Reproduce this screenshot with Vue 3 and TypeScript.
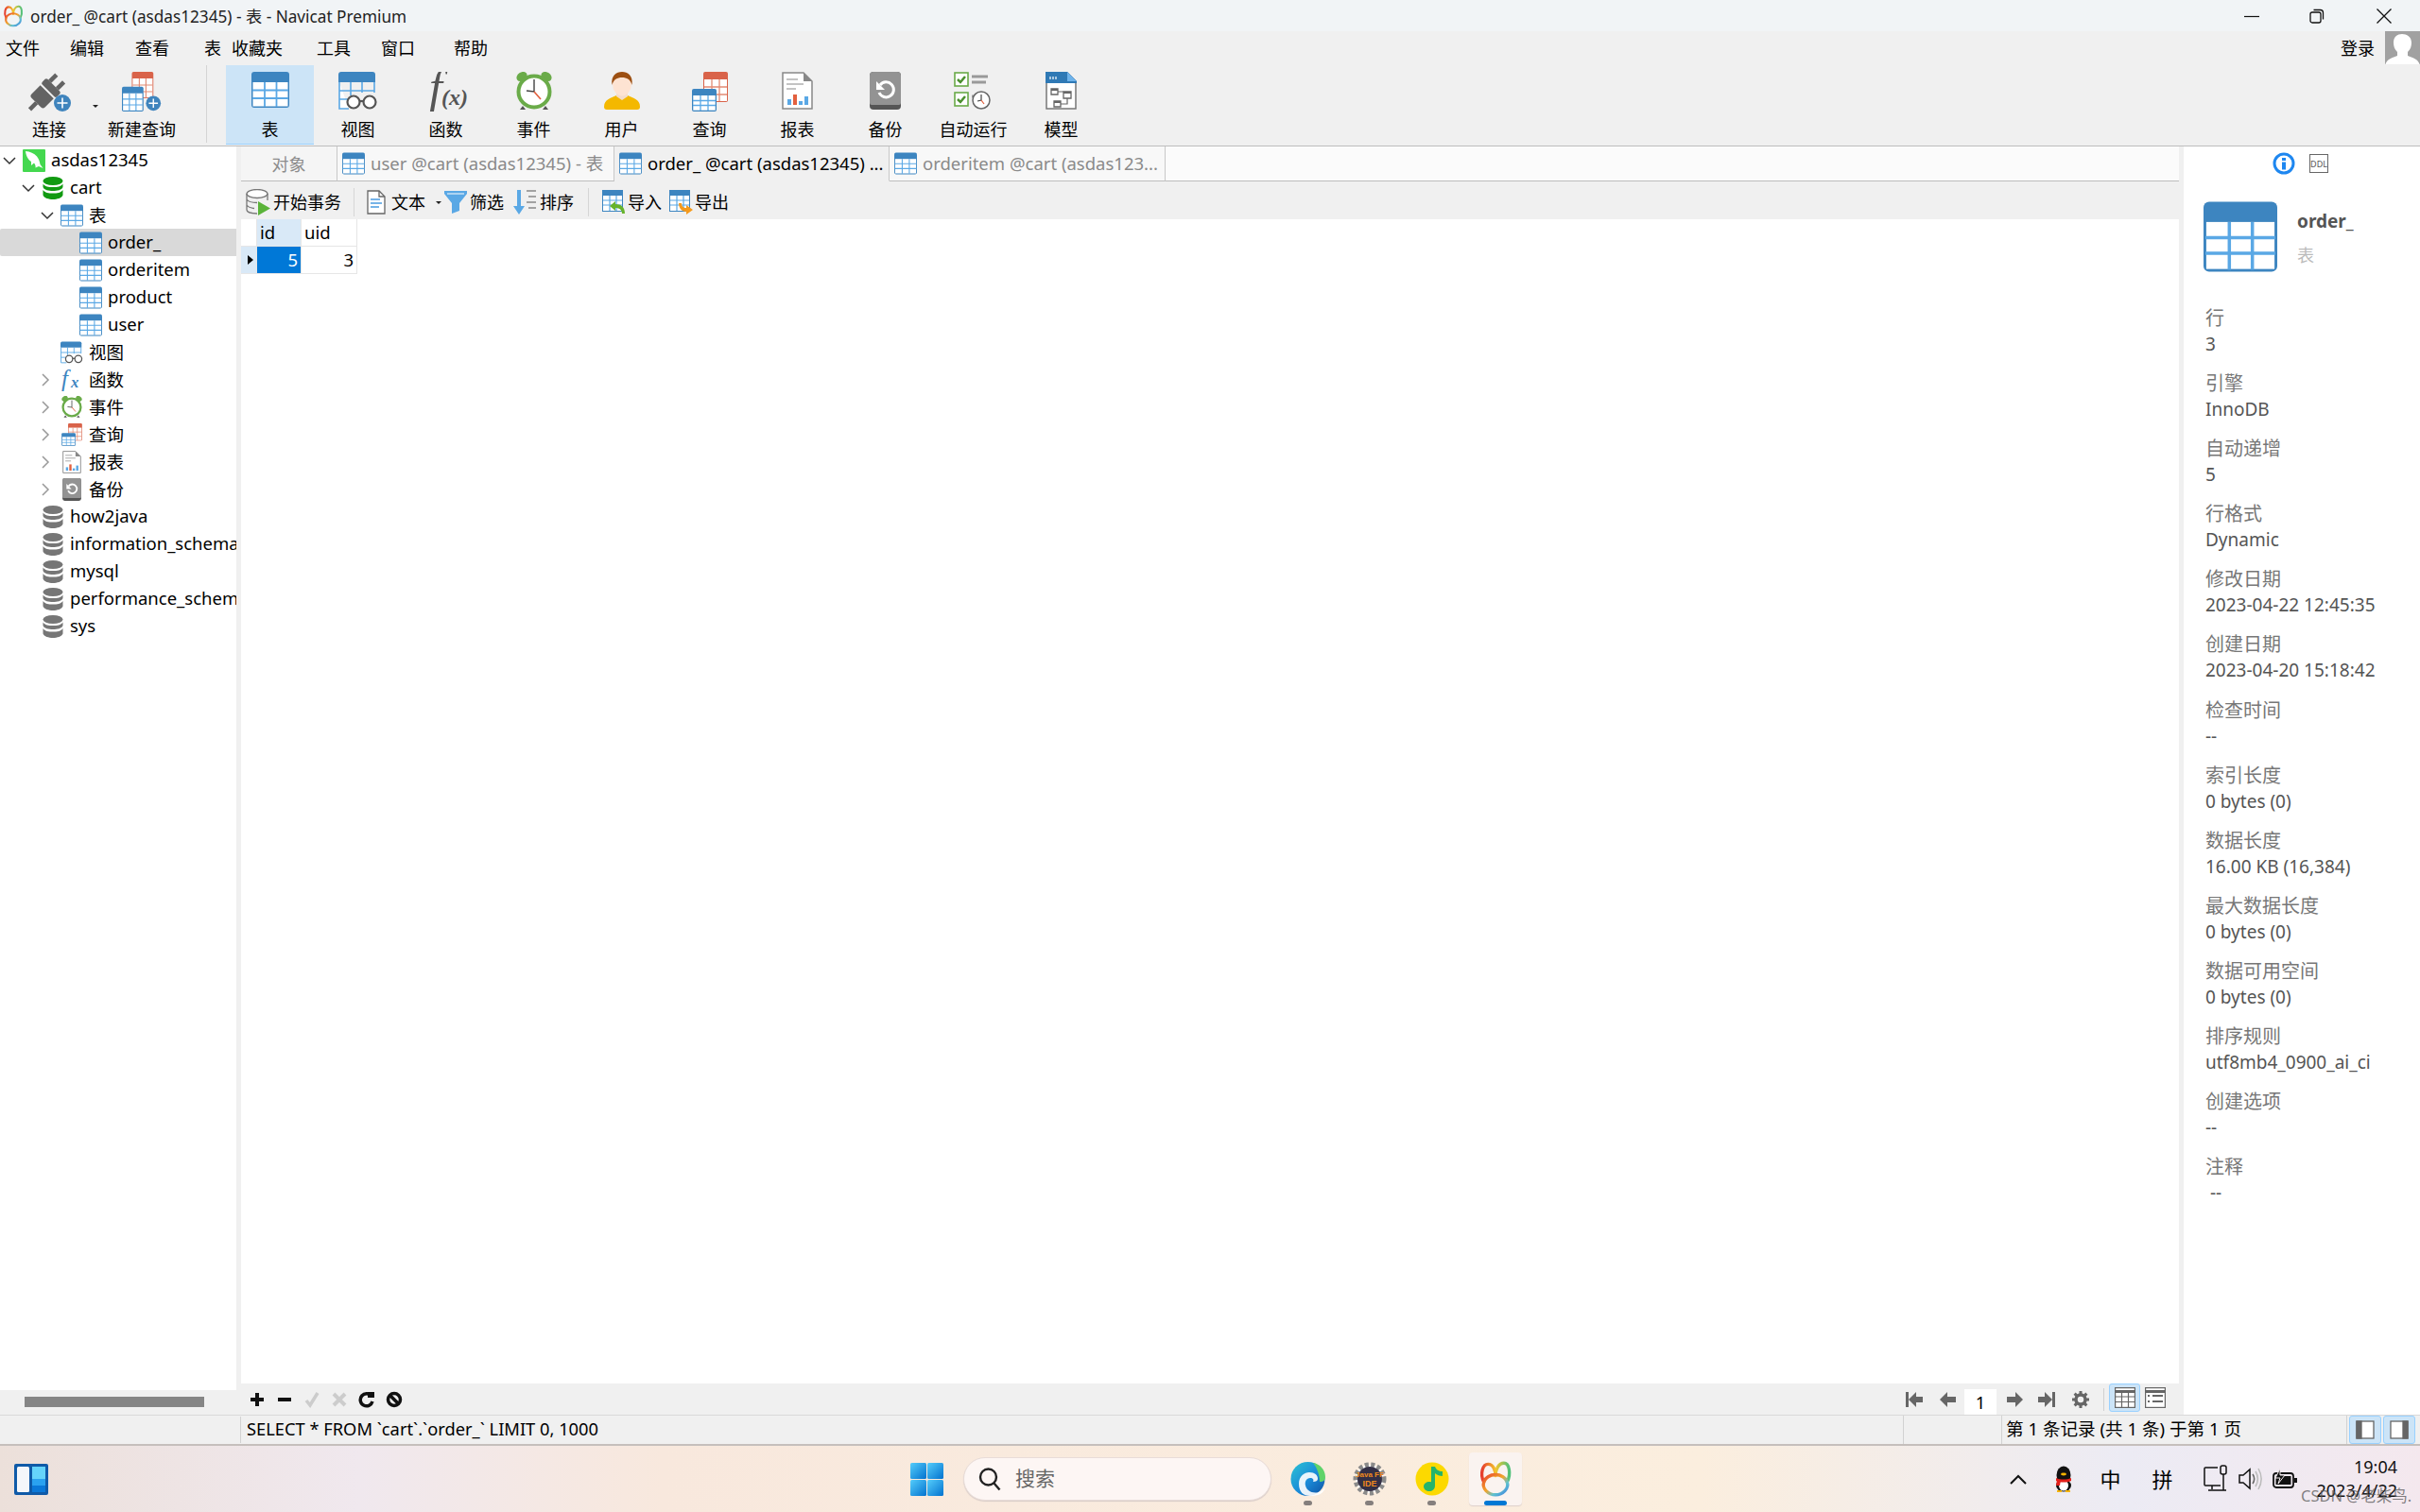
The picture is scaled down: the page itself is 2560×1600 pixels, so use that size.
<script setup lang="ts">
interface ToolItem {
  label: string
  icon: string
  w: number
  h: number
  active?: boolean
}

interface TreeRow {
  label: string
  level: number
  icon: string
  chevron?: 'down' | 'right'
  selected?: boolean
  cls?: string
}

const menus = [
  { label: '文件', w: 68 },
  { label: '编辑', w: 69 },
  { label: '查看', w: 73 },
  { label: '表', w: 29 },
  { label: '收藏夹', w: 90 },
  { label: '工具', w: 68 },
  { label: '窗口', w: 77 },
  { label: '帮助', w: 60 },
]

const tools: ToolItem[] = [
  { label: '表', icon: 'i-table', w: 40, h: 38, active: true },
  { label: '视图', icon: 'i-view', w: 42, h: 40 },
  { label: '函数', icon: 'i-func', w: 44, h: 42 },
  { label: '事件', icon: 'i-clock', w: 40, h: 42 },
  { label: '用户', icon: 'i-user', w: 38, h: 40 },
  { label: '查询', icon: 'i-query', w: 38, h: 42 },
  { label: '报表', icon: 'i-report', w: 33, h: 40 },
  { label: '备份', icon: 'i-backup', w: 33, h: 40 },
  { label: '自动运行', icon: 'i-auto', w: 42, h: 40 },
  { label: '模型', icon: 'i-model', w: 33, h: 40 },
]

const tree: TreeRow[] = [
  { label: 'asdas12345', level: 0, icon: 'i-dolphin', chevron: 'down' },
  { label: 'cart', level: 1, icon: 'i-db', chevron: 'down', cls: 'db-on' },
  { label: '表', level: 2, icon: 'i-table', chevron: 'down' },
  { label: 'order_', level: 3, icon: 'i-table', selected: true },
  { label: 'orderitem', level: 3, icon: 'i-table' },
  { label: 'product', level: 3, icon: 'i-table' },
  { label: 'user', level: 3, icon: 'i-table' },
  { label: '视图', level: 2, icon: 'i-view' },
  { label: '函数', level: 2, icon: 'i-fx', chevron: 'right' },
  { label: '事件', level: 2, icon: 'i-clock', chevron: 'right' },
  { label: '查询', level: 2, icon: 'i-query', chevron: 'right' },
  { label: '报表', level: 2, icon: 'i-report', chevron: 'right' },
  { label: '备份', level: 2, icon: 'i-backup', chevron: 'right' },
  { label: 'how2java', level: 1, icon: 'i-db', cls: 'db-off' },
  { label: 'information_schema', level: 1, icon: 'i-db', cls: 'db-off' },
  { label: 'mysql', level: 1, icon: 'i-db', cls: 'db-off' },
  { label: 'performance_schema', level: 1, icon: 'i-db', cls: 'db-off' },
  { label: 'sys', level: 1, icon: 'i-db', cls: 'db-off' },
]

const tabs = [
  { label: 'user @cart (asdas12345) - 表', w: 293, state: 'idle' },
  { label: 'order_ @cart (asdas12345) ...', w: 291, state: 'active' },
  { label: 'orderitem @cart (asdas123...', w: 292, state: 'idle' },
]

const info = [
  ['行', '3'],
  ['引擎', 'InnoDB'],
  ['自动递增', '5'],
  ['行格式', 'Dynamic'],
  ['修改日期', '2023-04-22 12:45:35'],
  ['创建日期', '2023-04-20 15:18:42'],
  ['检查时间', '--'],
  ['索引长度', '0 bytes (0)'],
  ['数据长度', '16.00 KB (16,384)'],
  ['最大数据长度', '0 bytes (0)'],
  ['数据可用空间', '0 bytes (0)'],
  ['排序规则', 'utf8mb4_0900_ai_ci'],
  ['创建选项', '--'],
  ['注释', ' --'],
]
</script>

<template>
  <div class="app">
    <svg class="defs" aria-hidden="true">
      <defs>
        <linearGradient id="g-ring" x1="0" y1="0" x2="1" y2="1">
          <stop offset="0" stop-color="#e8442e" />
          <stop offset="0.45" stop-color="#f2a52a" />
          <stop offset="0.7" stop-color="#5fc3d0" />
          <stop offset="1" stop-color="#3f7fe0" />
        </linearGradient>
        <linearGradient id="g-arch" x1="0" y1="0" x2="1" y2="0">
          <stop offset="0" stop-color="#e63c2e" />
          <stop offset="0.5" stop-color="#f5c62c" />
          <stop offset="1" stop-color="#4fc07a" />
        </linearGradient>
        <linearGradient id="g-edge" x1="0" y1="0" x2="1" y2="1">
          <stop offset="0" stop-color="#2cc4d4" />
          <stop offset="0.55" stop-color="#1a8ad8" />
          <stop offset="1" stop-color="#0f4fa0" />
        </linearGradient>
        <linearGradient id="g-win" x1="0" y1="0" x2="1" y2="1">
          <stop offset="0" stop-color="#55cdfb" />
          <stop offset="1" stop-color="#0272cf" />
        </linearGradient>

        <symbol id="i-table" viewBox="0 0 40 38">
          <rect width="40" height="38" rx="3" fill="#3d85c0" />
          <rect x="1.5" y="11" width="37" height="25.5" fill="#fff" />
          <path d="M14 11v26M26.500 11v26M1 19.500h38M1 28h38" stroke="#5aa8e5" stroke-width="1.800" fill="none" />
        </symbol>
        <symbol id="i-view" viewBox="0 0 42 40">
          <path d="M3 0h33a3 3 0 0 1 3 3v8H0V3a3 3 0 0 1 3-3z" fill="#3d85c0" />
          <path d="M1 11v28h10M38 11v11M1 20h37M1 29h9M13 11v14M25 11v11" stroke="#5aa8e5" stroke-width="1.600" fill="#fff" />
          <circle cx="16" cy="32" r="6.500" fill="#fff" stroke="#555" stroke-width="2.200" />
          <circle cx="33" cy="32" r="6.500" fill="#fff" stroke="#555" stroke-width="2.200" />
          <path d="M22.500 31h4" stroke="#555" stroke-width="2.200" />
        </symbol>
        <symbol id="i-func" viewBox="0 0 44 42">
          <text x="4" y="33" font-family="Liberation Serif" font-style="italic" font-size="50" fill="#555">f</text>
          <text x="17" y="35" font-family="Liberation Serif" font-style="italic" font-weight="700" font-size="24" fill="#555">(x)</text>
        </symbol>
        <symbol id="i-fx" viewBox="0 0 26 26">
          <text x="1" y="21" font-family="Liberation Serif" font-style="italic" font-size="27" fill="#3d85c0">f</text>
          <text x="12" y="22" font-family="Liberation Serif" font-style="italic" font-weight="700" font-size="18" fill="#3d85c0">x</text>
        </symbol>
        <symbol id="i-clock" viewBox="0 0 40 42">
          <ellipse cx="7" cy="5" rx="6" ry="4.500" fill="#6aab49" transform="rotate(-35 7 5)" />
          <ellipse cx="33" cy="5" rx="6" ry="4.500" fill="#6aab49" transform="rotate(35 33 5)" />
          <path d="M8 36l-3 4h6zM32 36l3 4h-6z" fill="#555" />
          <circle cx="20" cy="21" r="16.500" fill="#fff" stroke="#6aab49" stroke-width="4" />
          <path d="M20 8v13l-8-1" stroke="#444" stroke-width="1.400" fill="none" />
          <path d="M20 21l7 8" stroke="#e2603f" stroke-width="1.600" />
        </symbol>
        <symbol id="i-user" viewBox="0 0 38 40">
          <path d="M0 37c0-8 7-9 13-12h12c6 3 13 4 13 12a3 3 0 0 1-3 3H3a3 3 0 0 1-3-3z" fill="#f4b800" />
          <path d="M13 20h12v6l-6 4-6-4z" fill="#f3dccb" />
          <ellipse cx="19" cy="13" rx="10" ry="12.500" fill="#fde3d2" />
          <path d="M8.500 14C7 4 13 0 19 0s12 4 10.500 14C28 8 24 6 19 6s-9 2-10.500 8z" fill="#9c4f12" />
        </symbol>
        <symbol id="i-query" viewBox="0 0 38 42">
          <rect x="12" y="0" width="26" height="32" rx="2" fill="#d9634a" />
          <rect x="13" y="8" width="24" height="23" fill="#fff" />
          <path d="M21 8v23M29 8v23M13 16h24M13 24h24" stroke="#e28b74" stroke-width="1.300" fill="none" />
          <rect x="0" y="18" width="26" height="24" rx="2" fill="#3d85c0" />
          <rect x="1.300" y="25" width="23.400" height="15.700" fill="#fff" />
          <path d="M9 25v16M17 25v16M1 30.500h24M1 35.500h24" stroke="#5aa8e5" stroke-width="1.300" fill="none" />
        </symbol>
        <symbol id="i-report" viewBox="0 0 33 40">
          <path d="M1 1h22l9 9v29H1z" fill="#fff" stroke="#888" stroke-width="1.500" />
          <path d="M23 1l9 9h-9z" fill="#888" />
          <path d="M5 8h12M5 13h18M5 18h10" stroke="#888" stroke-width="1.200" />
          <path d="M6 29h4v6H6z" fill="#5aa8e5" />
          <path d="M12 24h4v11h-4z" fill="#e2603f" />
          <path d="M18 31h4v4h-4z" fill="#5aa8e5" />
          <path d="M24 26h4v9h-4z" fill="#5aa8e5" />
        </symbol>
        <symbol id="i-backup" viewBox="0 0 33 40">
          <rect width="33" height="40" rx="4" fill="#555" />
          <path d="M0 4a4 4 0 0 1 4-4h25a4 4 0 0 1 4 4v29a2 2 0 0 1-2 2H2a2 2 0 0 1-2-2z" fill="#939393" />
          <path d="M11 14a8 8 0 1 1-1 8" stroke="#fff" stroke-width="3" fill="none" />
          <path d="M7 10v9h9z" fill="#fff" />
        </symbol>
        <symbol id="i-auto" viewBox="0 0 42 40">
          <rect x="1" y="1" width="14" height="14" fill="#fff" stroke="#6aab49" stroke-width="1.600" />
          <path d="M4 8l3 3 5-6" stroke="#4b8f2f" stroke-width="2.500" fill="none" />
          <rect x="1" y="22" width="14" height="14" fill="#fff" stroke="#6aab49" stroke-width="1.600" />
          <path d="M4 29l3 3 5-6" stroke="#4b8f2f" stroke-width="2.500" fill="none" />
          <path d="M19 5h17M19 11h15" stroke="#999" stroke-width="3" />
          <path d="M19 26h4" stroke="#999" stroke-width="3" />
          <circle cx="29" cy="30" r="9" fill="#fff" stroke="#666" stroke-width="1.500" />
          <path d="M29 24v6l-4 1" stroke="#444" stroke-width="1.200" fill="none" />
          <path d="M29 30l3 4" stroke="#e2603f" stroke-width="1.200" />
        </symbol>
        <symbol id="i-model" viewBox="0 0 33 40">
          <path d="M1 1h22l9 9v29H1z" fill="#fff" stroke="#777" stroke-width="1.500" />
          <path d="M0 0h23l10 10v2H0z" fill="#2f79b5" />
          <path d="M23 0l10 10H23z" fill="#6db2ea" />
          <path d="M5 5v3M8 5v3M11 5v3" stroke="#fff" stroke-width="1.200" />
          <g fill="#fff" stroke="#666" stroke-width="1.300">
            <path d="M6 18h7v6H6zM19 21h8v7h-8zM9 31h7v6H9z" />
          </g>
          <path d="M6 18h7v2H6zM19 21h8v2h-8zM9 31h7v2H9z" fill="#666" />
          <path d="M13 21h6M23 28v6h-7" stroke="#666" stroke-width="1.200" fill="none" />
        </symbol>
        <symbol id="i-plug" viewBox="0 0 47 44">
          <g transform="rotate(-45 20 22)" fill="#636363">
            <rect x="-5" y="20" width="10" height="4.500" />
            <path d="M5 15a3 3 0 0 1 3-3h13v20H8a3 3 0 0 1-3-3z" />
          </g>
          <g transform="rotate(-45 20 22)" fill="#636363">
            <rect x="23" y="11" width="8" height="22" rx="2" />
            <rect x="31" y="14" width="10" height="4.500" />
            <rect x="31" y="25" width="10" height="4.500" />
          </g>
          <circle cx="37" cy="33" r="9" fill="#3f84bd" />
          <path d="M37 27.500v11M31.500 33h11" stroke="#fff" stroke-width="1.600" />
        </symbol>
        <symbol id="i-newq" viewBox="0 0 48 48">
          <rect x="12" y="0" width="26" height="32" rx="2" fill="#d9634a" />
          <rect x="13" y="8" width="24" height="23" fill="#fff" />
          <path d="M21 8v23M29 8v23M13 16h24M13 24h24" stroke="#e28b74" stroke-width="1.300" fill="none" />
          <rect x="0" y="18" width="26" height="30" rx="2" fill="#3d85c0" />
          <rect x="1.300" y="26" width="23.400" height="20.700" fill="#fff" />
          <path d="M9 26v21M17 26v21M1 33h24M1 40h24" stroke="#5aa8e5" stroke-width="1.300" fill="none" />
          <circle cx="38" cy="38" r="9" fill="#3f84bd" />
          <path d="M38 32.500v11M32.500 38h11" stroke="#fff" stroke-width="1.600" />
        </symbol>
        <symbol id="i-db" viewBox="0 0 22 24">
          <ellipse cx="11" cy="4.500" rx="10.500" ry="4.500" fill="currentColor" />
          <path d="M.5 7.500c2 3 6 3.500 10.500 3.500s8.500-.5 10.500-3.500v3.500c-1 3-6 4-10.500 4S1.500 14 .5 11z" fill="currentColor" />
          <path d="M.5 14c2 3 6 3.500 10.500 3.500S19.500 17 21.500 14v5.500c-1 3-6 4.500-10.500 4.500S1.500 22.500.5 19.500z" fill="currentColor" />
        </symbol>
        <symbol id="i-dolphin" viewBox="0 0 24 24">
          <rect width="24" height="24" rx="1" fill="#44d84f" />
          <path d="M3 2c5 .5 9 2 12 5.500 2 2.500 3 5.500 3.500 8.500l3 4-4.500-2-3.500 1.500c.5-2-.5-4-1.500-5l-3 2.500 0-4C6 11 3.500 7 3 2z" fill="#fff" />
        </symbol>
        <symbol id="i-start" viewBox="0 0 26 28">
          <ellipse cx="12" cy="5" rx="11" ry="4.500" fill="#fff" stroke="#777" stroke-width="1.300" />
          <path d="M1 5v17c0 2.500 5 4 11 4M23 5v7M1 11c2 3 7 3.500 11 3.500M1 17c2 3 5 3 8 3.500" fill="none" stroke="#777" stroke-width="1.300" />
          <path d="M13 13l13 7.500L13 28z" fill="#5ab339" />
        </symbol>
        <symbol id="i-text" viewBox="0 0 20 26">
          <path d="M1 1h12l6 6v18H1z" fill="#fff" stroke="#666" stroke-width="1.300" />
          <path d="M13 1v6h6" fill="none" stroke="#666" stroke-width="1.300" />
          <path d="M4 10h10M4 14h12M4 18h9" stroke="#4a9ae0" stroke-width="1.500" />
        </symbol>
        <symbol id="i-filter" viewBox="0 0 24 24">
          <path d="M0 0h24v3l-8 10v8l-8 3V13L0 3z" fill="#5aa8e5" />
          <path d="M3 3h18" stroke="#fff" stroke-width="1" />
        </symbol>
        <symbol id="i-sort" viewBox="0 0 24 26">
          <path d="M4 0h4v17h4l-6 9-6-9h4z" fill="#5aa8e5" />
          <path d="M14 1h10M16 7h8M14 13h10M16 19h8" stroke="#888" stroke-width="1.400" />
        </symbol>
        <symbol id="i-import" viewBox="0 0 26 26">
          <rect width="22" height="23" fill="#3d85c0" />
          <rect x="1" y="6" width="20" height="16" fill="#fff" />
          <path d="M8 6v16M15 6v16M1 11h20M1 16h20" stroke="#5aa8e5" stroke-width="1.200" />
          <path d="M8 17l6-5v3c6 0 10 3 10 10h-3c0-4-3-6-7-6v3z" fill="#67b32c" />
        </symbol>
        <symbol id="i-export" viewBox="0 0 26 26">
          <rect width="22" height="23" fill="#3d85c0" />
          <rect x="1" y="6" width="20" height="16" fill="#fff" />
          <path d="M8 6v16M15 6v16M1 11h20M1 16h20" stroke="#5aa8e5" stroke-width="1.200" />
          <path d="M10 14h3c0 3 2 5 5 5v-3l7 5-7 5v-3c-5 0-8-4-8-9z" fill="#f59a1c" />
        </symbol>
        <symbol id="i-logo" viewBox="0 0 32 34">
          <path d="M5 20C1 12 4 3 9 3s7 6 7 11M16 14c0-6 3-12 8-12s7 10 3 18" fill="none" stroke="url(#g-arch)" stroke-width="3" stroke-linecap="round" />
          <path d="M5 20c-2 6 4 12 11 12s13-6 11-12c-1-4-6-7-11-7s-10 3-11 7z" fill="none" stroke="url(#g-ring)" stroke-width="3" />
        </symbol>
      </defs>
    </svg>

    <header class="titlebar">
      <svg class="title-logo" width="22" height="24"><use href="#i-logo" /></svg>
      <span class="title-text">order_ @cart (asdas12345) - 表 - Navicat Premium</span>
      <div class="win-btns">
        <button class="win-btn"><svg width="16" height="16"><path d="M0 8.500h16" stroke="#111" stroke-width="1.200" /></svg></button>
        <button class="win-btn">
          <svg width="16" height="16" fill="none" stroke="#111" stroke-width="1.300"><rect x="1" y="4" width="11" height="11" rx="2" /><path d="M4.500 1.500h7a3 3 0 0 1 3 3v7" /></svg>
        </button>
        <button class="win-btn"><svg width="16" height="16"><path d="M.5.500l15 15M15.500.500l-15 15" stroke="#111" stroke-width="1.300" /></svg></button>
      </div>
    </header>

    <nav class="menubar">
      <span v-for="m in menus" :key="m.label" class="menu-item" :style="{ width: m.w + 'px' }">{{ m.label }}</span>
      <span class="login">登录</span>
      <div class="avatar">
        <svg width="37" height="36" viewBox="0 0 37 36"><path d="M0 36c2-7 8-8 13-10v-4c-3-3-4-6-4-10 0-6 4-9 9-9s10 3 10 9c0 4-1 7-4 10v4c5 2 11 3 13 10z" fill="#fff" /></svg>
      </div>
    </nav>

    <section class="toolbar">
      <button class="tool tool-conn">
        <span class="tool-icon"><svg width="47" height="44"><use href="#i-plug" /></svg></span>
        <span class="tool-label">连接</span>
      </button>
      <span class="caret conn-caret"></span>
      <button class="tool tool-newq">
        <span class="tool-icon"><svg width="48" height="42"><use href="#i-newq" /></svg></span>
        <span class="tool-label">新建查询</span>
      </button>
      <span class="tool-sep"></span>
      <button v-for="t in tools" :key="t.label" class="tool" :class="{ 'tool-on': t.active }">
        <span class="tool-icon"><svg :width="t.w" :height="t.h"><use :href="'#' + t.icon" /></svg></span>
        <span class="tool-label">{{ t.label }}</span>
      </button>
    </section>

    <div class="workspace">
      <aside class="side">
        <div class="tree">
          <div
            v-for="row in tree"
            :key="row.label + row.level"
            class="tree-row"
            :class="{ selected: row.selected }"
            :style="{ paddingLeft: 3 + row.level * 20 + 'px' }"
          >
            <span class="chev">
              <svg v-if="row.chevron === 'down'" width="14" height="10"><path d="M1 2l6 6 6-6" fill="none" stroke="#333" stroke-width="1.500" /></svg>
              <svg v-else-if="row.chevron === 'right'" width="10" height="14"><path d="M2 1l6 6-6 6" fill="none" stroke="#999" stroke-width="1.500" /></svg>
            </span>
            <span class="tree-icon" :class="row.cls">
              <svg width="24" height="24"><use :href="'#' + row.icon" /></svg>
            </span>
            <span class="tree-label">{{ row.label }}</span>
          </div>
        </div>
        <div class="side-scroll"><span class="side-thumb"></span></div>
      </aside>

      <main class="main">
        <div class="tabs">
          <span class="tab tab-obj">对象</span>
          <span
            v-for="t in tabs"
            :key="t.label"
            class="tab"
            :class="t.state === 'active' ? 'tab-active' : 'tab-idle'"
            :style="{ width: t.w + 'px' }"
          >
            <svg width="24" height="24"><use href="#i-table" /></svg>
            <span class="tab-text">{{ t.label }}</span>
          </span>
          <span class="tab-rest"></span>
        </div>

        <div class="subbar">
          <span class="sub-item si-start"><svg width="26" height="28"><use href="#i-start" /></svg>开始事务</span>
          <span class="sub-sep sep-a"></span>
          <span class="sub-item si-text"><svg width="20" height="26"><use href="#i-text" /></svg>文本<span class="caret"></span></span>
          <span class="sub-item si-filter"><svg width="24" height="24"><use href="#i-filter" /></svg>筛选</span>
          <span class="sub-item si-sort"><svg width="24" height="26"><use href="#i-sort" /></svg>排序</span>
          <span class="sub-sep sep-b"></span>
          <span class="sub-item si-imp"><svg width="26" height="26"><use href="#i-import" /></svg>导入</span>
          <span class="sub-item si-exp"><svg width="26" height="26"><use href="#i-export" /></svg>导出</span>
        </div>

        <div class="grid-wrap">
          <div class="grid">
            <div class="gc g-corner"></div>
            <div class="gc g-head g-head-on">id</div>
            <div class="gc g-head">uid</div>
            <div class="gc g-rowhead"><span class="row-mark"></span></div>
            <div class="gc g-num g-sel">5</div>
            <div class="gc g-num">3</div>
          </div>
        </div>

        <div class="pager">
          <span class="pg-cell">
            <svg width="18" height="18"><path d="M2 9h14M9 2v14" stroke="#111" stroke-width="4" /></svg>
          </span>
          <span class="pg-cell">
            <svg width="18" height="18"><path d="M2 9h14" stroke="#111" stroke-width="4" /></svg>
          </span>
          <span class="pg-cell">
            <svg width="18" height="18"><path d="M3 10l4 5 8-13" fill="none" stroke="#ccc" stroke-width="3.500" /></svg>
          </span>
          <span class="pg-cell">
            <svg width="18" height="18"><path d="M3 3l12 12M15 3L3 15" stroke="#ccc" stroke-width="4" /></svg>
          </span>
          <span class="pg-cell">
            <svg width="18" height="18" fill="none" stroke="#111" stroke-width="3.500"><path d="M14 5.500A6.500 6.500 0 1 0 15 11" /><path d="M10 1h7v6h-7z" fill="#111" stroke="none" /></svg>
          </span>
          <span class="pg-cell">
            <svg width="18" height="18" fill="none" stroke="#111" stroke-width="3.500"><circle cx="9" cy="9" r="6.500" /><path d="M4.500 4.500l9 9" /></svg>
          </span>

          <div class="pg-right">
            <span class="pg-nav pn-first"><svg width="18" height="16"><path d="M0 0h3v16H0zM3 8l8-8v5h7v6h-7v5z" fill="#666" /></svg></span>
            <span class="pg-nav pn-prev"><svg width="18" height="16"><path d="M0 8l8-8v5h9v6H8v5z" fill="#666" /></svg></span>
            <span class="pg-box">1</span>
            <span class="pg-nav pn-next"><svg width="18" height="16"><path d="M18 8l-8-8v5H1v6h9v5z" fill="#666" /></svg></span>
            <span class="pg-nav pn-last"><svg width="18" height="16"><path d="M18 0h-3v16h3zM15 8L7 0v5H0v6h7v5z" fill="#666" /></svg></span>
            <span class="pg-nav pn-gear">
              <svg width="18" height="18" viewBox="0 0 18 18"><circle cx="9" cy="9" r="5" fill="none" stroke="#666" stroke-width="3.500" /><path d="M9 0v4M9 14v4M0 9h4M14 9h4M2.600 2.600l3 3M12.400 12.400l3 3M15.400 2.600l-3 3M5.600 12.400l-3 3" stroke="#666" stroke-width="3" /></svg>
            </span>
            <span class="pg-sep"></span>
            <span class="pg-view pg-view-on">
              <svg width="22" height="22" fill="#fff" stroke="#666" stroke-width="1.200"><rect x=".6" y=".6" width="20.800" height="20.800" /><path d="M.6 4.500h20.800" stroke-width="3" /><path d="M7.500 4v17M14.500 4v17M1 10h20M1 15.500h20" /></svg>
            </span>
            <span class="pg-view">
              <svg width="22" height="22" fill="#fff" stroke="#666" stroke-width="1.200"><rect x=".6" y=".6" width="20.800" height="20.800" /><path d="M.6 4.500h20.800" stroke-width="3" /><path d="M3 9h2M8 9h11M3 15h2M8 15h11" stroke-width="2" /></svg>
            </span>
          </div>
        </div>
      </main>

      <aside class="panel">
        <div class="panel-tabs">
          <svg width="24" height="24" viewBox="0 0 24 24"><circle cx="12" cy="12" r="10" fill="#fff" stroke="#1e87f0" stroke-width="3" /><path d="M10 6h4v3h-4zM10 10.500h4v8h-4z" fill="#1e87f0" /></svg>
          <span class="ddl">DDL</span>
        </div>
        <div class="panel-head">
          <svg width="78" height="75"><use href="#i-table" /></svg>
          <div class="panel-name">
            <span class="obj-name">order_</span>
            <span class="obj-type">表</span>
          </div>
        </div>
        <dl class="props">
          <div v-for="p in info" :key="p[0]" class="prop">
            <dt>{{ p[0] }}</dt>
            <dd>{{ p[1] }}</dd>
          </div>
        </dl>
      </aside>
    </div>

    <footer class="statusbar">
      <span class="st-left"></span>
      <span class="st-sql">SELECT * FROM `cart`.`order_` LIMIT 0, 1000</span>
      <span class="st-gap"></span>
      <span class="st-rec">第 1 条记录 (共 1 条) 于第 1 页</span>
      <span class="st-toggle">
        <svg width="20" height="20" fill="#fff" stroke="#666" stroke-width="1.300"><rect x="1" y="1" width="18" height="18" /><rect x="1" y="1" width="5" height="18" fill="#666" /></svg>
      </span>
      <span class="st-toggle">
        <svg width="20" height="20" fill="#fff" stroke="#666" stroke-width="1.300"><rect x="1" y="1" width="18" height="18" /><rect x="14" y="1" width="5" height="18" fill="#666" /></svg>
      </span>
    </footer>

    <div class="taskbar">
      <div class="tb-left">
        <svg width="36" height="33" viewBox="0 0 36 33">
          <rect width="36" height="33" rx="2" fill="#0f5aa8" />
          <rect x="3" y="3" width="13" height="27" rx="1.500" fill="#f5f7fa" />
          <rect x="19" y="3" width="14" height="13" fill="#65d4fb" />
          <rect x="19" y="16" width="14" height="7" fill="#2aa2f0" />
          <rect x="19" y="23" width="14" height="7" fill="#0a78d8" />
        </svg>
      </div>

      <div class="tb-center">
        <svg class="tb-win" width="35" height="35" viewBox="0 0 35 35">
          <rect width="17" height="17" rx="1.500" fill="url(#g-win)" />
          <rect x="18" width="17" height="17" rx="1.500" fill="url(#g-win)" />
          <rect y="18" width="17" height="17" rx="1.500" fill="url(#g-win)" />
          <rect x="18" y="18" width="17" height="17" rx="1.500" fill="url(#g-win)" />
        </svg>
        <div class="tb-search">
          <svg width="24" height="26" fill="none" stroke="#222" stroke-width="2.400"><circle cx="10.500" cy="11" r="8.500" /><path d="M16.500 17.500l6 7" /></svg>
          <span class="tb-search-text">搜索</span>
        </div>
        <span class="tb-app app-edge">
          <svg width="37" height="36" viewBox="0 0 37 36">
            <circle cx="18.500" cy="18" r="18" fill="url(#g-edge)" />
            <path d="M9 23c0-8 6-12 11-12 6 0 9 3 9 7 0 2-2 3-5 3 1-2 0-4-3-4-4 0-6 4-5 8 1 5 7 9 14 7 3-1 5-3 7-5-2 7-8 9-16 9-7 0-12-4-12-13z" fill="#fff" opacity=".9" />
            <path d="M24 1c7 1 13 7 13 15 0 3-2 5-6 5 0-8-3-15-7-20z" fill="#5fd36a" />
          </svg>
          <i class="dot"></i>
        </span>
        <span class="tb-app app-java">
          <svg width="36" height="36" viewBox="0 0 36 36">
            <circle cx="18" cy="18" r="15" fill="#fff" stroke="#8a8a8a" stroke-width="5" stroke-dasharray="4 2.500" />
            <circle cx="18" cy="18" r="13" fill="#332f45" />
            <text x="18" y="16" text-anchor="middle" font-family="Liberation Sans" font-weight="700" font-size="8" fill="#f08a1d">Java FF</text>
            <text x="18" y="26" text-anchor="middle" font-family="Liberation Sans" font-weight="700" font-size="9" fill="#f08a1d">IDE</text>
          </svg>
          <i class="dot"></i>
        </span>
        <span class="tb-app app-music">
          <svg width="36" height="36" viewBox="0 0 36 36">
            <circle cx="18" cy="18" r="17.500" fill="#fcd900" />
            <path d="M17 5h4c1 3 4 5 8 5v5c-3 0-6-1-8-3v13c0 4-3 6-6 6s-6-2-6-5 3-5 6-5c1 0 2 0 2 .5z" fill="#25b46b" />
          </svg>
          <i class="dot"></i>
        </span>
        <span class="tb-app app-navi">
          <svg width="36" height="38"><use href="#i-logo" /></svg>
          <i class="bar"></i>
        </span>
      </div>

      <div class="tray">
        <span class="tr c-chev"><svg width="18" height="11"><path d="M1 10l8-8 8 8" fill="none" stroke="#111" stroke-width="2" /></svg></span>
        <span class="tr c-qq">
          <svg width="20" height="28" viewBox="0 0 20 28">
            <ellipse cx="10" cy="10" rx="7.500" ry="9.500" fill="#111" />
            <ellipse cx="10" cy="21" rx="8" ry="6.500" fill="#111" />
            <ellipse cx="10" cy="21" rx="5" ry="5.500" fill="#fff" />
            <ellipse cx="10" cy="9" rx="3" ry="1.400" fill="#f5b301" />
            <path d="M2 13c5 2 11 2 16 0v3c-5 2-11 2-16 0z" fill="#e3201b" />
            <path d="M3 15h4l-1 6H2z" fill="#e3201b" />
            <path d="M3 26h5v2H3zM12 26h5v2h-5z" fill="#f5b301" />
          </svg>
        </span>
        <span class="tr c-zh">中</span>
        <span class="tr c-py">拼</span>
        <span class="tr c-mon">
          <svg width="26" height="30" viewBox="0 0 26 30" fill="none" stroke="#111" stroke-width="1.500">
            <path d="M15 3H2a1 1 0 0 0-1 1v17a1 1 0 0 0 1 1h16" />
            <path d="M9 22v4M5 27h19" />
            <rect x="18" y="1" width="6" height="9" rx="2" />
            <path d="M21 10v17" />
          </svg>
        </span>
        <span class="tr c-spk">
          <svg width="25" height="26" viewBox="0 0 25 26" fill="none" stroke-width="1.500">
            <path d="M1 9h4l7-6v20l-7-6H1z" stroke="#111" />
            <path d="M15 8c2 3 2 7 0 10" stroke="#666" />
            <path d="M18 5c3 5 3 11 0 16M21 2c4 7 4 15 0 22" stroke="#bbb" />
          </svg>
        </span>
        <span class="tr c-bat">
          <svg width="26" height="22" viewBox="0 0 26 22">
            <rect x="1" y="5" width="21" height="15" rx="3" fill="none" stroke="#111" stroke-width="1.800" />
            <rect x="3.500" y="8" width="16" height="9" fill="#111" />
            <rect x="23" y="10" width="3" height="5" fill="#111" />
            <path d="M8 0L3 10h5l-2 6 7-9H8z" fill="#111" stroke="#f3ebee" stroke-width="1" />
          </svg>
        </span>
        <span class="tr c-clock">
          <span>19:04</span>
          <span>2023/4/22</span>
        </span>
      </div>

      <span class="watermark">CSDN @老柴鸟.</span>
    </div>
  </div>
</template>

<style>
html,
body {
  margin: 0;
  background: #fff;
}
</style>

<style scoped>
.app {
  width: 2560px;
  height: 1600px;
  display: flex;
  flex-direction: column;
  overflow: hidden;
  position: relative;
  background: #f0f0f0;
  color: #000;
  font-family: 'Noto Sans', 'Noto Sans CJK SC', sans-serif;
  font-size: 18.5px;
}

.defs {
  position: absolute;
  width: 0;
  height: 0;
}

button {
  border: 0;
  padding: 0;
  background: none;
  font: inherit;
  color: inherit;
}

svg {
  flex: none;
  display: block;
}

.titlebar {
  height: 33px;
  display: flex;
  align-items: center;
  background: #f1f4f6;
}

.title-logo {
  margin: 0 7px 0 3px;
}

.title-text {
  font-size: 17.2px;
  color: #222;
  white-space: nowrap;
}

.win-btns {
  margin-left: auto;
  display: flex;
}

.win-btn {
  width: 69px;
  height: 33px;
  display: flex;
  align-items: center;
  justify-content: center;
}

.win-btn:last-child {
  width: 73px;
  margin-right: 2px;
}

.menubar {
  height: 35px;
  box-sizing: border-box;
  display: flex;
  align-items: center;
  padding: 0 0 2px 6px;
  background: #f0f0f0;
  font-size: 18px;
}

.menu-item {
  flex: none;
}

.login {
  margin-left: auto;
  margin-right: 11px;
}

.avatar {
  width: 37px;
  height: 36px;
  background: #a1a1a1;
  align-self: flex-start;
  overflow: hidden;
}

.toolbar {
  height: 87px;
  box-sizing: border-box;
  display: flex;
  align-items: flex-start;
  padding: 1px 0 0 6px;
  border-bottom: 1px solid #bdbdbd;
  background: #f0f0f0;
}

.tool {
  flex: none;
  width: 93px;
  height: 84px;
  box-sizing: border-box;
  display: flex;
  flex-direction: column;
  align-items: center;
  border-bottom: 1px solid transparent;
}

.tool-conn {
  width: 92px;
}

.tool-newq {
  width: 92px;
}

.tool-on {
  background: #cce4f7;
  border-bottom-color: #99d1ff;
}

.tool-icon {
  height: 48px;
  margin-top: 7px;
  display: flex;
  align-items: flex-start;
  justify-content: center;
}

.tool-label {
  height: 26px;
  line-height: 26px;
  font-size: 18px;
}

.tool-sep {
  flex: none;
  width: 1px;
  height: 82px;
  margin: 0 20px 0 22px;
  background: #d4d4d4;
}

.caret {
  display: inline-block;
  width: 0;
  height: 0;
  border-style: solid;
  border-width: 3px 3px 0;
  border-color: #222 transparent transparent;
}

.conn-caret {
  flex: none;
  margin: 42px 0 0;
}

.workspace {
  height: 1342px;
  display: flex;
}

.side {
  width: 250px;
  flex: none;
  display: flex;
  flex-direction: column;
}

.tree {
  flex: 1;
  min-height: 0;
  background: #fff;
  overflow: hidden;
}

.tree-row {
  height: 29px;
  display: flex;
  align-items: center;
  white-space: nowrap;
}

.tree-row.selected {
  background: #d9d9d9;
  border-radius: 2px 0 0 2px;
}

.chev {
  flex: none;
  width: 20px;
  display: flex;
  justify-content: flex-start;
}

.tree-icon {
  flex: none;
  width: 25px;
  height: 24px;
  padding-left: 1px;
  box-sizing: border-box;
}

.db-on {
  color: #119a11;
}

.db-off {
  color: #767676;
}

.tree-label {
  margin: -2px 0 0 6px;
}

.side-scroll {
  height: 26px;
  flex: none;
  background: #f0f0f0;
  padding: 7px 0 0 26px;
  box-sizing: border-box;
}

.side-thumb {
  display: block;
  width: 190px;
  height: 11px;
  background: #858585;
}

.main {
  width: 2060px;
  flex: none;
  padding-left: 5px;
  box-sizing: border-box;
  display: flex;
  flex-direction: column;
  background: #f0f0f0;
}

.tabs {
  height: 37px;
  flex: none;
  display: flex;
  background: #fbfbfb;
  margin-right: 5px;
}

.tab {
  flex: none;
  box-sizing: border-box;
  display: flex;
  align-items: center;
  gap: 6px;
  padding-left: 5px;
  white-space: nowrap;
  overflow: hidden;
  border-bottom: 1px solid #bdbdbd;
  border-right: 1px solid #c8c8c8;
}

.tab-text {
  margin-top: -2px;
}

.tab-obj {
  width: 102px;
  justify-content: center;
  padding-left: 0;
  gap: 0;
  color: #8c8c8c;
  font-size: 18px;
  background: #f5f5f5;
}

.tab-idle {
  background: #f8f8f8;
  color: #8a8a8a;
}

.tab-active {
  background: #f0f0f0;
  color: #000;
  border-bottom-color: #f0f0f0;
}

.tab-rest {
  flex: 1;
  border-bottom: 1px solid #bdbdbd;
}

.subbar {
  height: 40px;
  flex: none;
  box-sizing: border-box;
  display: flex;
  align-items: center;
  font-size: 18px;
  padding: 4px 0 0 5px;
  margin-right: 5px;
}

.sub-item {
  flex: none;
  display: flex;
  align-items: center;
  gap: 3px;
  white-space: nowrap;
  line-height: 28px;
}

.sub-sep {
  width: 1px;
  height: 30px;
  flex: none;
  background: #d6d6d6;
}

.sep-a {
  margin: 0 13px 0 13px;
}

.si-text .caret {
  margin-left: 8px;
}

.si-text svg {
  margin-right: 3px;
}

.si-filter {
  margin-left: 3px;
}

.si-sort {
  margin-left: 10px;
  gap: 4px;
}

.sep-b {
  margin: 0 11px 0 15px;
}

.si-imp,
.si-exp {
  gap: 1px;
}

.si-imp svg,
.si-exp svg {
  margin-left: 3px;
}

.si-imp {
  margin-left: 0;
}

.si-exp {
  margin-left: 5px;
}

.grid-wrap {
  flex: 1;
  min-height: 0;
  background: #fff;
  margin-right: 5px;
}

.grid {
  display: grid;
  grid-template-columns: 17px 47px 59px;
  grid-auto-rows: 29px;
  width: 123px;
}

.gc {
  box-sizing: border-box;
  display: flex;
  align-items: center;
  padding-bottom: 2px;
  border-right: 1px solid #e6e6e6;
  border-bottom: 1px solid #e6e6e6;
}

.g-corner {
  background: #fff;
}

.g-head {
  padding-left: 3px;
  background: #fff;
}

.g-head-on {
  background: #d9e9f7;
}

.g-rowhead {
  background: #d9e9f7;
  padding-left: 7px;
  padding-bottom: 0;
}

.row-mark {
  width: 0;
  height: 0;
  border-style: solid;
  border-width: 5px 0 5px 6px;
  border-color: transparent transparent transparent #000;
}

.g-num {
  justify-content: flex-end;
  padding-right: 3px;
}

.g-sel {
  background: #0078d7;
  color: #fff;
}

.pager {
  height: 33px;
  flex: none;
  box-sizing: border-box;
  display: flex;
  align-items: center;
  padding-left: 2px;
}

.pg-cell {
  flex: none;
  width: 29px;
  display: flex;
  justify-content: center;
}

.pg-right {
  margin-left: auto;
  display: flex;
  align-items: center;
  height: 100%;
  padding-right: 14px;
}

.pg-nav {
  flex: none;
  display: flex;
  justify-content: center;
}

.pn-first {
  width: 36px;
}

.pn-prev {
  width: 35px;
}

.pn-next {
  width: 38px;
}

.pn-last {
  width: 30px;
}

.pn-gear {
  width: 42px;
}

.pg-box {
  flex: none;
  width: 34px;
  height: 27px;
  align-self: flex-end;
  display: flex;
  align-items: center;
  justify-content: center;
  background: #fff;
}

.pg-sep {
  flex: none;
  width: 1px;
  height: 24px;
  margin: 0 5px 0 3px;
  background: #d0d0d0;
}

.pg-view {
  flex: none;
  width: 32px;
  height: 30px;
  box-sizing: border-box;
  display: flex;
  align-items: center;
  justify-content: center;
  align-self: flex-start;
}

.pg-view-on {
  width: 33px;
  background: #cce4f7;
  border: 1px solid #99d1ff;
  border-radius: 3px;
}

.panel {
  width: 250px;
  flex: none;
  background: #fff;
  padding-left: 23px;
  box-sizing: border-box;
  overflow: hidden;
  font-size: 19px;
}

.panel-tabs {
  height: 36px;
  display: flex;
  align-items: center;
  gap: 15px;
  padding-left: 71px;
}

.ddl {
  width: 20px;
  height: 20px;
  box-sizing: border-box;
  border: 1px solid #666;
  color: #555;
  font-size: 9px;
  display: flex;
  align-items: center;
  justify-content: center;
}

.panel-head {
  margin: 22px 0 0 -2px;
  display: flex;
  height: 75px;
}

.panel-name {
  margin-left: 21px;
  display: flex;
  flex-direction: column;
}

.obj-name {
  font-weight: 700;
  color: #555;
  line-height: 30px;
  height: 30px;
  margin-top: 6px;
}

.obj-type {
  font-size: 18px;
  color: #bbb;
  line-height: 30px;
  margin-top: 6px;
}

.props {
  margin: 34px 0 0;
}

.prop {
  height: 69.100px;
}

.prop dt {
  height: 29px;
  line-height: 29px;
  font-size: 20px;
  color: #777;
}

.prop dd {
  margin: 0;
  height: 27px;
  line-height: 27px;
  color: #555;
  white-space: pre;
}

.statusbar {
  height: 31px;
  flex: none;
  box-sizing: border-box;
  border-top: 1px solid #d9d9d9;
  display: flex;
  align-items: stretch;
  background: #f0f0f0;
}

.st-left {
  width: 254px;
  flex: none;
  border-right: 1px solid #d2d2d2;
  margin: 1px 0;
}

.st-sql {
  width: 1759px;
  flex: none;
  padding-left: 6px;
  box-sizing: border-box;
  line-height: 27px;
  font-size: 18.3px;
  white-space: nowrap;
  border-right: 1px solid #d2d2d2;
}

.st-gap {
  width: 103px;
  flex: none;
  border-right: 1px solid #d2d2d2;
}

.st-rec {
  width: 365px;
  flex: none;
  padding-left: 4px;
  box-sizing: border-box;
  line-height: 28px;
  font-size: 18.6px;
  border-right: 1px solid #d2d2d2;
  white-space: nowrap;
}

.st-toggle {
  width: 34px;
  flex: none;
  margin-left: 2px;
  box-sizing: border-box;
  background: #cce4f7;
  border: 1px solid #99d1ff;
  border-radius: 3px;
  display: flex;
  align-items: center;
  justify-content: center;
}

.taskbar {
  flex: none;
  box-sizing: border-box;
  border-top: 2px solid #c5bfbc;
  height: 72px;
  display: flex;
  align-items: center;
  position: relative;
  background: linear-gradient(90deg, #ece0da 0, #f0e8ee 380px, #f8e8dd 700px, #fbeede 1800px, #ecebf4 2250px, #f4e8ee 2560px);
}

.tb-left {
  width: 963px;
  flex: none;
  box-sizing: border-box;
  padding-left: 15px;
}

.tb-center {
  display: flex;
  align-items: center;
}

.tb-search {
  width: 326px;
  height: 46px;
  margin-left: 21px;
  box-sizing: border-box;
  border-radius: 23px;
  background: #fdf6f4;
  border: 1px solid #e8dcd8;
  box-shadow: 0 1px 1px #d8ccc8;
  display: flex;
  align-items: center;
  padding-left: 15px;
  gap: 15px;
  color: #666;
  font-size: 21px;
}

.tb-search-text {
  line-height: 26px;
  margin-top: -2px;
}

.tb-app {
  position: relative;
  flex: none;
  display: flex;
  justify-content: center;
}

.app-edge {
  margin-left: 20px;
  width: 37px;
}

.app-java {
  margin-left: 29px;
  width: 36px;
}

.app-music {
  margin-left: 30px;
  width: 36px;
}

.app-navi {
  margin-left: 21px;
  width: 56px;
  height: 56px;
  align-items: center;
  background: #faf3f0;
  border-radius: 4px;
  box-shadow: 0 1px 1px #ddd0cb;
}

.dot {
  position: absolute;
  left: 50%;
  bottom: -10px;
  width: 9px;
  height: 5px;
  margin-left: -5px;
  border-radius: 3px;
  background: #857f7d;
}

.bar {
  position: absolute;
  left: 16px;
  bottom: 0;
  width: 24px;
  height: 5px;
  border-radius: 3px;
  background: #0078d4;
}

.tray {
  margin-left: auto;
  padding-right: 24px;
  display: flex;
  align-items: center;
  height: 100%;
}

.tr {
  flex: none;
  display: flex;
  justify-content: center;
}

.c-chev {
  width: 40px;
  margin-right: 5px;
  margin-left: -5px;
}

.c-qq {
  width: 46px;
}

.c-zh {
  width: 53px;
  font-size: 22px;
  margin-top: -2px;
}

.c-py {
  width: 57px;
  font-size: 22px;
  margin-top: -2px;
}

.c-mon {
  width: 46px;
  box-sizing: border-box;
  padding-left: 10px;
}

.c-spk {
  width: 36px;
}

.c-bat {
  width: 38px;
}

.c-clock {
  width: 100px;
  flex-direction: column;
  align-items: flex-end;
  font-size: 18px;
  line-height: 25px;
  color: #111;
  margin-top: -1px;
}

.watermark {
  position: absolute;
  left: 2434px;
  top: 43px;
  font-size: 16.5px;
  color: rgba(90, 90, 90, 0.75);
  line-height: 20px;
  white-space: nowrap;
}
</style>
